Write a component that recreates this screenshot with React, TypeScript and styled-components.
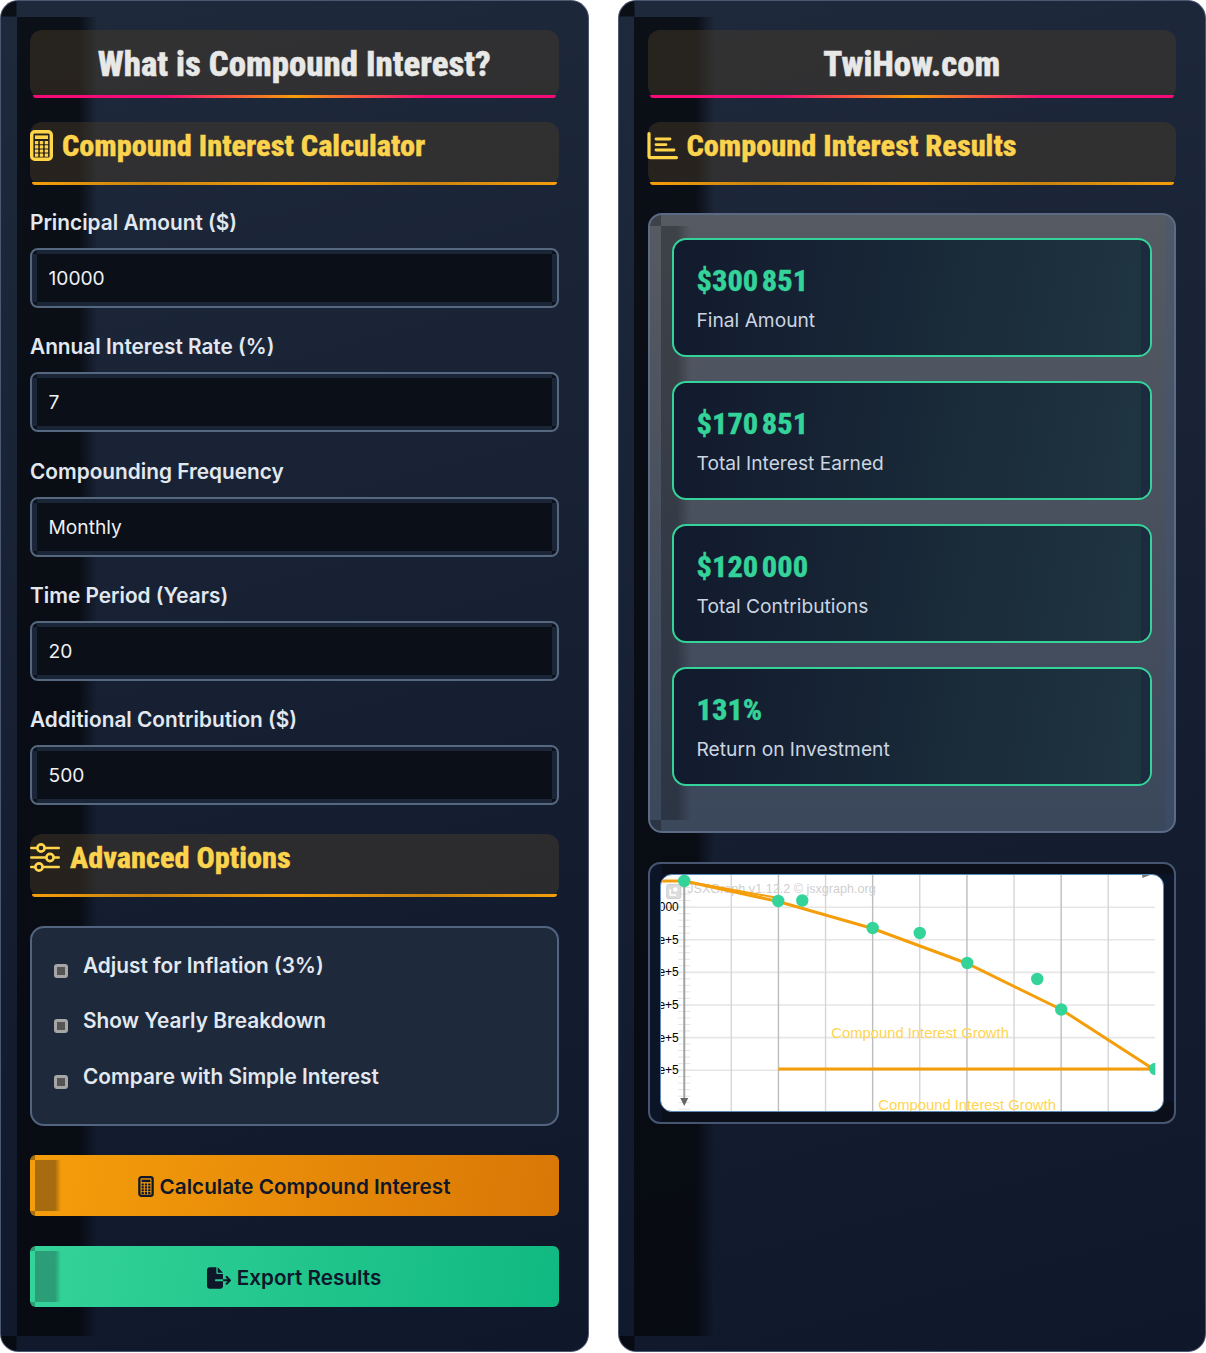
import React from "react";
import styled, { createGlobalStyle, css } from "styled-components";
import { FaFileExport } from "react-icons/fa6";

const Global = createGlobalStyle`
  html, body { margin: 0; padding: 0; background: #fff; }
  body { font-family: Inter, "Liberation Sans", sans-serif; }
  * { box-sizing: border-box; }
`;

const Page = styled.div`
  width: 1206px;
  height: 1353px;
  display: grid;
  grid-template-columns: 588.5px 588.5px;
  column-gap: 29px;
`;

const bandLayers = (strip: number, width: number, fade: number, dark: string) => css`
  background:
    linear-gradient(${dark}, ${dark}) 0 0 / ${strip}px ${strip}px no-repeat,
    linear-gradient(${dark}, ${dark}) 0 100% / ${strip}px ${strip}px no-repeat,
    linear-gradient(90deg, ${dark} 0, ${dark} ${width - fade}px, transparent ${width}px)
      ${strip}px ${strip}px / ${width}px calc(100% - ${2 * strip}px) no-repeat;
`;

const Panel = styled.section`
  position: relative;
  height: 1352px;
  padding: 29px 29px 0;
  border: 1.5px solid #4a5870;
  border-radius: 18px;
  background: linear-gradient(165deg, #1e293b 0%, #0f172a 100%);
  display: flex;
  flex-direction: column;
  isolation: isolate;
  &::before {
    content: "";
    position: absolute;
    inset: 0;
    z-index: -1;
    border-radius: inherit;
    ${bandLayers(15.5, 80, 18, "rgba(4,5,8,.7)")}
  }
`;

const heading = `"Roboto Condensed", Roboto, "Liberation Sans", sans-serif`;

const Banner = styled.h1`
  position: relative;
  margin: 0 0 24px;
  height: 68px;
  border-radius: 12px;
  background: rgba(74, 62, 42, 0.44);
  display: flex;
  align-items: center;
  justify-content: center;
  font-family: ${heading};
  font-stretch: 75%;
  font-weight: 800;
  font-size: 34.85px;
  -webkit-text-stroke: 0.45px currentColor;
  color: #e8e8e6;
  &::after {
    content: "";
    position: absolute;
    left: 2.5px;
    right: 2.5px;
    bottom: 0;
    height: 3px;
    border-radius: 0 0 10px 10px;
    background: linear-gradient(90deg, #f50c78, #f50c78 25%, #f59e0b 50%, #f50c78 75%, #f50c78);
  }
`;

const Section = styled.h2<{ $gap: number }>`
  position: relative;
  margin: 0;
  height: 63px;
  padding-bottom: 16px;
  border-radius: 12px;
  background: rgba(74, 62, 42, 0.44);
  display: flex;
  align-items: center;
  gap: ${(p) => p.$gap}px;
  font-family: ${heading};
  font-stretch: 75%;
  font-weight: 800;
  font-size: 30.33px;
  -webkit-text-stroke: 0.35px currentColor;
  color: #fcd34d;
  &::after {
    content: "";
    position: absolute;
    left: 2px;
    right: 2px;
    bottom: 0;
    height: 3px;
    border-radius: 0 0 8px 8px;
    background: linear-gradient(90deg, #f59e0b, #c98410 22%, #f59e0b 50%, #c98410 75%, #f59e0b);
  }
`;

const Form = styled.div`
  display: flex;
  flex-direction: column;
  margin-top: 25px;
  margin-bottom: 29px;
`;

const Field = styled.div`
  margin-bottom: 26.25px;
  &:last-child { margin-bottom: 0; }
`;

const Label = styled.label`
  display: block;
  height: 26px;
  margin-bottom: 12px;
  font-size: 20.8px;
  font-weight: 600;
  line-height: 26px;
  color: #e2e8f0;
`;

const InputFrame = styled.div`
  height: 60px;
  padding: 4px 5px;
  border: 2px solid #566780;
  border-radius: 8px;
  background:
    linear-gradient(#0c1018, #0c1018) 0 0 / 5px 4px no-repeat,
    linear-gradient(#0c1018, #0c1018) 0 100% / 5px 4px no-repeat,
    linear-gradient(#0c1018, #0c1018) 100% 0 / 5px 4px no-repeat,
    linear-gradient(#0c1018, #0c1018) 100% 100% / 5px 4px no-repeat,
    #1a2538;
`;

const Input = styled.input`
  display: block;
  width: 100%;
  height: 100%;
  padding: 0 11.5px;
  border: 0;
  outline: 0;
  background: #0b0f17;
  font-family: Inter, sans-serif;
  font-size: 19.2px;
  color: #eef0f3;
  appearance: none;
`;

const OptionsBox = styled.div`
  margin-top: 29px;
  margin-bottom: 29px;
  height: 200px;
  padding: 24px 22px;
  border: 2px solid #526480;
  border-radius: 14px;
  background: #1e293b;
  display: flex;
  flex-direction: column;
  gap: 29.6px;
`;

const OptionRow = styled.label`
  display: flex;
  align-items: center;
  gap: 15px;
  height: 26px;
  font-size: 20.8px;
  font-weight: 600;
  color: #e2e8f0;
`;

const Check = styled.input`
  appearance: none;
  width: 14px;
  height: 14px;
  margin: 11px 0 0;
  flex: none;
  border: 3px solid #a6a6a6;
  border-radius: 3px;
  background: #555;
`;

const ActionButton = styled.button<{ $from: string; $to: string; $band: string }>`
  position: relative;
  height: 61px;
  margin-bottom: 30px;
  padding: 2px 0 0;
  border: 0;
  border-radius: 6px;
  background: linear-gradient(100deg, ${(p) => p.$from}, ${(p) => p.$to});
  display: flex;
  align-items: center;
  justify-content: center;
  gap: 5.5px;
  font-family: Inter, sans-serif;
  font-size: 20.7px;
  font-weight: 600;
  color: #0f172a;
  isolation: isolate;
  overflow: hidden;
  &::before {
    content: "";
    position: absolute;
    inset: 0;
    z-index: -1;
    ${(p) => bandLayers(5, 26, 6, p.$band)}
  }
`;

const StatsPanel = styled.div`
  position: relative;
  margin-top: 28px;
  height: 620px;
  padding: 23px 22px 0;
  border: 2px solid #5b6b85;
  border-radius: 14px;
  background: linear-gradient(180deg, #565a62 0%, #3b475b 100%);
  display: flex;
  flex-direction: column;
  gap: 24px;
  isolation: isolate;
  overflow: hidden;
  &::before {
    content: "";
    position: absolute;
    inset: 0;
    z-index: -1;
    ${bandLayers(11, 30, 14, "rgba(8,10,14,.3)")}
  }
  &::after {
    content: "";
    position: absolute;
    top: 0;
    bottom: 0;
    right: 0;
    width: 8px;
    z-index: -1;
    background: rgba(60, 85, 125, 0.28);
  }
`;

const StatCard = styled.div`
  position: relative;
  height: 119px;
  padding: 22px 23px;
  border: 2px solid #34d399;
  border-radius: 14px;
  background: linear-gradient(100deg, #121a2d 0%, #1f3641 100%);
  overflow: hidden;
  isolation: isolate;
  &::after {
    content: "";
    position: absolute;
    top: 0;
    bottom: 0;
    right: 0;
    width: 9px;
    z-index: -1;
    background: #1c2b40;
  }
`;

const StatValue = styled.div`
  height: 38px;
  font-family: ${heading};
  font-stretch: 75%;
  font-weight: 800;
  font-size: 30.4px;
  -webkit-text-stroke: 0.3px currentColor;
  line-height: 38px;
  color: #34d399;
`;

const StatLabel = styled.div`
  margin-top: 8px;
  font-size: 19.2px;
  line-height: 24px;
  font-weight: 400;
  color: #cbd5e1;
`;

const ChartFrame = styled.div`
  margin-top: 29px;
  height: 262px;
  padding: 10px;
  border: 2px solid #465570;
  border-radius: 12px;
  background:
    linear-gradient(90deg, #0c1528, #0c1528 12px, transparent 12px),
    linear-gradient(180deg, #0a0f19, #0a0f19 10px, transparent 10px, transparent 238px, #0a0f19 238px),
    #0b1426;
`;

const ChartSurface = styled.div`
  height: 238px;
  border: 1px solid #5d8ab5;
  border-radius: 12px;
  background: #fff;
  overflow: hidden;
`;

const ChartSvg = styled.svg`
  display: block;
  width: 100%;
  height: 100%;
`;

const IconSvg = styled.svg`
  flex: none;
  overflow: visible;
`;

const Yellow = "#ffd54a";

const CalcIcon = ({ color, w, h }: { color: string; w: number; h: number }) => (
  <IconSvg width={w} height={h} viewBox="0 0 23 31" fill="none">
    <rect x="1.7" y="1.7" width="19.6" height="27.6" rx="3" stroke={color} strokeWidth="3.4" />
    <rect x="5" y="5.4" width="13" height="3.6" fill={color} />
    {[12.6, 16.8, 21, 25.2].map((y) =>
      [6.6, 11.5, 16.4].map((x) => (
        <rect key={`${x}-${y}`} x={x - 1.7} y={y - 1.6} width="3.4" height="3.2" rx=".5" fill={color} />
      ))
    )}
  </IconSvg>
);

const ChartIcon = () => (
  <IconSvg width="30" height="28" viewBox="0 0 30 28" fill="none">
    <path d="M1 1.5V24a1.6 1.6 0 0 0 1.6 1.6H28.5" stroke={Yellow} strokeWidth="3.2" strokeLinecap="round" />
    <path d="M8 7H22M8 12.6H18M8 18H26" stroke={Yellow} strokeWidth="2.8" strokeLinecap="round" />
  </IconSvg>
);

const SlidersIcon = () => (
  <IconSvg width="30" height="29" viewBox="0 0 30 29" fill="none">
    <g stroke={Yellow} strokeWidth="2.6" strokeLinecap="round">
      <path d="M1.3 5H7M15 5H28.7M1.3 14.5H16M24 14.5H28.7M1.3 24H5M13 24H28.7" />
      <circle cx="11" cy="5" r="3.6" />
      <circle cx="20" cy="14.5" r="3.6" />
      <circle cx="9" cy="24" r="3.6" />
    </g>
  </IconSvg>
);

const gridX = [731, 778.2, 825.3, 872.4, 919.5, 966.7, 1013.8, 1060.9, 1108];
const gridY = [907.3, 939.8, 972.4, 1005, 1037.6, 1070.2];
const dots: [number, number][] = [
  [684, 881], [778, 901], [802, 900.5], [872.4, 928], [919.5, 933],
  [967, 963], [1037, 979], [1061, 1009.5], [1155, 1069],
];
const ticks = Array.from({ length: 36 }, (_, i) => 881 + i * 6.52);

const GrowthChart = () => (
  <ChartSvg viewBox="661 875 502 236">
    <defs>
      <clipPath id="plot"><rect x="660" y="874" width="495" height="237" /></clipPath>
    </defs>
    <g clipPath="url(#plot)">
      {gridY.map((y) => <line key={y} x1="660" x2="1155" y1={y} y2={y} stroke="#e6e6e6" strokeWidth="1.6" />)}
      {gridX.map((x, i) => <line key={x} x1={x} x2={x} y1="874" y2="1111" stroke={i % 2 ? "#bdbdbd" : "#d6d6d6"} strokeWidth="1.4" />)}
      {ticks.map((y) => <line key={y} x1="678" x2="690" y1={y} y2={y} stroke="#e4e4e4" strokeWidth="1" />)}
      <line x1="684" x2="684" y1="874" y2="1100" stroke="#a3a3a3" strokeWidth="2" />
      <path d="M680 1098h8l-4 8z" fill="#666" />
      <g fontFamily="'Liberation Sans', sans-serif" fontSize="12" fill="#000">
        <text x="678.5" y="910.5" textAnchor="end">000</text>
        {gridY.slice(1).map((y) => <text key={y} x="678.5" y={y + 4} textAnchor="end">e+5</text>)}
      </g>
      <g fill="none">
        <rect x="666.5" y="884.5" width="14" height="14" rx="1.5" fill="#dcdcdc" stroke="#cfcfcf" />
        <circle cx="675" cy="889.5" r="2.2" fill="#fff" />
        <path d="M670 889v6h6" stroke="#fff" strokeWidth="1.6" />
      </g>
      <text x="687" y="893" fontFamily="'Liberation Sans', sans-serif" fontSize="12.6" fill="#cfcfcf">JSXGraph v1.12.2 © jsxgraph.org</text>
      <g fontFamily="'Liberation Sans', sans-serif" fontSize="14.8" fill="#ffd54f">
        <text x="831" y="1038">Compound Interest Growth</text>
        <text x="878" y="1110">Compound Interest Growth</text>
      </g>
      <path d="M660 881H684L778 901.5L872.4 928.5L967 963.5L1061 1009.5L1153 1069H778" fill="none" stroke="#f59e0b" strokeWidth="3" />
      <path d="M684 881L778 898" fill="none" stroke="#f59e0b" strokeWidth="2" />
      {dots.map(([x, y]) => <circle key={x} cx={x} cy={y} r="6.2" fill="#34d399" />)}
    </g>
    <path d="M1142 878l8-3v-1h-8z" fill="#777" />
  </ChartSvg>
);

const fields = [
  ["Principal Amount ($)", "10000"],
  ["Annual Interest Rate (%)", "7"],
  ["Compounding Frequency", "Monthly"],
  ["Time Period (Years)", "20"],
  ["Additional Contribution ($)", "500"],
];
const options = ["Adjust for Inflation (3%)", "Show Yearly Breakdown", "Compare with Simple Interest"];
const stats = [
  ["$300\u202f851", "Final Amount"],
  ["$170\u202f851", "Total Interest Earned"],
  ["$120\u202f000", "Total Contributions"],
  ["131%", "Return on Investment"],
];

export default function App() {
  return (
    <Page>
      <Global />
      <Panel>
        <Banner>What is Compound Interest?</Banner>
        <Section $gap={9}>
          <CalcIcon color={Yellow} w={23} h={31} />
          Compound Interest Calculator
        </Section>
        <Form>
          {fields.map(([label, value]) => (
            <Field key={label}>
              <Label>{label}</Label>
              <InputFrame>
                <Input readOnly value={value} />
              </InputFrame>
            </Field>
          ))}
        </Form>
        <Section $gap={10}>
          <SlidersIcon />
          Advanced Options
        </Section>
        <OptionsBox>
          {options.map((o) => (
            <OptionRow key={o}>
              <Check type="checkbox" />
              {o}
            </OptionRow>
          ))}
        </OptionsBox>
        <ActionButton $from="#f59e0b" $to="#d97706" $band="rgba(60,40,20,.42)">
          <CalcIcon color="#0f172a" w={16} h={21} />
          Calculate Compound Interest
        </ActionButton>
        <ActionButton $from="#34d399" $to="#10b981" $band="rgba(30,60,60,.35)">
          <FaFileExport size={24} />
          Export Results
        </ActionButton>
      </Panel>
      <Panel>
        <Banner>TwiHow.com</Banner>
        <Section $gap={9}>
          <ChartIcon />
          Compound Interest Results
        </Section>
        <StatsPanel>
          {stats.map(([v, l]) => (
            <StatCard key={l}>
              <StatValue>{v}</StatValue>
              <StatLabel>{l}</StatLabel>
            </StatCard>
          ))}
        </StatsPanel>
        <ChartFrame>
          <ChartSurface>
            <GrowthChart />
          </ChartSurface>
        </ChartFrame>
      </Panel>
    </Page>
  );
}
